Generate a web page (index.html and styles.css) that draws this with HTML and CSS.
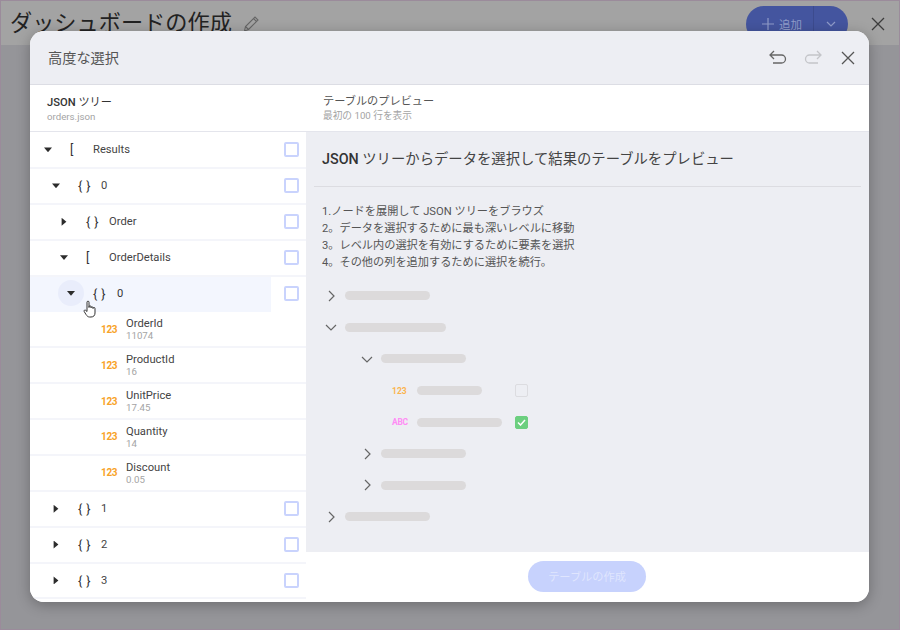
FILE: index.html
```html
<!DOCTYPE html>
<html lang="ja">
<head>
  <meta charset="UTF-8" />
  <title>ダッシュボードの作成</title>
  <link rel="stylesheet" href="styles.css">
</head>
<body>

<header class="topbar">
  <h1 class="page-title">ダッシュボードの作成</h1>
  <svg class="pencil" width="20" height="20" viewBox="0 0 20 20"><path d="M3.500 17l1-4.500L14 3l3 3-9.500 9.500zM4.500 12.500l3 3M12.500 4.500l3 3" fill="none" stroke="#666" stroke-width="1.100"/></svg>
  <div class="add-group">
    <span class="add-btn"><svg width="12" height="12" viewBox="0 0 12 12"><path d="M6 0v12M0 6h12" stroke="#8f9bc9" stroke-width="1.200"/></svg>追加</span>
    <span class="add-arrow"><svg width="10" height="6" viewBox="0 0 10 6"><path d="M1 1l4 4 4-4" fill="none" stroke="#8f9bc9" stroke-width="1.200"/></svg></span>
  </div>
  <svg class="page-close" width="14" height="14" viewBox="0 0 14 14"><path d="M1 1l12 12M13 1L1 13" stroke="#3c3c3c" stroke-width="1.300"/></svg>
</header>

<div class="dialog">
  <div class="dialog-head">
    <span class="dialog-title">高度な選択</span>
    <div class="dialog-tools">
      <svg width="20" height="20" viewBox="0 0 20 20"><path d="M6 3L2 7l4 4M2 7h11.500a4 4 0 0 1 0 8H5" fill="none" stroke="#666" stroke-width="1.300"/></svg>
      <svg width="20" height="20" viewBox="0 0 20 20"><path d="M14 3l4 4-4 4M18 7H6.500a4 4 0 0 0 0 8H15" fill="none" stroke="#c4c5c9" stroke-width="1.300"/></svg>
      <svg width="20" height="20" viewBox="0 0 20 20"><path d="M4 4l12 12M16 4L4 16" fill="none" stroke="#555" stroke-width="1.300"/></svg>
    </div>
  </div>

  <div class="sub-head">
    <div class="sub-left">
      <div class="sub-title sub-strong"><b>JSON</b> ツリー</div>
      <div class="sub-note">orders.json</div>
    </div>
    <div class="sub-right">
      <div class="sub-title">テーブルのプレビュー</div>
      <div class="sub-note">最初の 100 行を表示</div>
    </div>
  </div>

  <div class="dialog-body">
    <div class="tree">
      <div class="tree-row d0"><i class="tri tri-down"></i><span class="kind">[</span><span class="name">Results</span><i class="box"></i></div>
      <div class="tree-row d1"><i class="tri tri-down"></i><span class="kind">{ }</span><span class="name">0</span><i class="box"></i></div>
      <div class="tree-row d2"><i class="tri tri-right"></i><span class="kind">{ }</span><span class="name">Order</span><i class="box"></i></div>
      <div class="tree-row d2"><i class="tri tri-down"></i><span class="kind">[</span><span class="name">OrderDetails</span><i class="box"></i></div>
      <div class="tree-row d3 hovered">
        <div class="hover-fill"><span class="tri-halo"><i class="tri tri-down"></i></span><span class="kind">{ }</span><span class="name">0</span></div>
        <i class="box"></i>
      </div>
      <div class="tree-row leaf"><span class="num">123</span><div class="leaf-text"><span class="name">OrderId</span><span class="value">11074</span></div></div>
      <div class="tree-row leaf"><span class="num">123</span><div class="leaf-text"><span class="name">ProductId</span><span class="value">16</span></div></div>
      <div class="tree-row leaf"><span class="num">123</span><div class="leaf-text"><span class="name">UnitPrice</span><span class="value">17.45</span></div></div>
      <div class="tree-row leaf"><span class="num">123</span><div class="leaf-text"><span class="name">Quantity</span><span class="value">14</span></div></div>
      <div class="tree-row leaf"><span class="num">123</span><div class="leaf-text"><span class="name">Discount</span><span class="value">0.05</span></div></div>
      <div class="tree-row d1"><i class="tri tri-right"></i><span class="kind">{ }</span><span class="name">1</span><i class="box"></i></div>
      <div class="tree-row d1"><i class="tri tri-right"></i><span class="kind">{ }</span><span class="name">2</span><i class="box"></i></div>
      <div class="tree-row d1"><i class="tri tri-right"></i><span class="kind">{ }</span><span class="name">3</span><i class="box"></i></div>
    </div>

    <div class="preview">
      <div class="preview-main">
        <h2 class="preview-title"><b>JSON</b> ツリーからデータを選択して結果のテーブルをプレビュー</h2>
        <ol class="steps">
          <li>1.ノードを展開して JSON ツリーをブラウズ</li>
          <li>2。データを選択するために最も深いレベルに移動</li>
          <li>3。レベル内の選択を有効にするために要素を選択</li>
          <li>4。その他の列を追加するために選択を続行。</li>
        </ol>
        <div class="sketch">
          <div class="sk-row sk0"><svg class="chev" width="12" height="12" viewBox="0 0 12 12"><path d="M4 1l5 5-5 5" /></svg><i class="bar w85"></i></div>
          <div class="sk-row sk0"><svg class="chev" width="12" height="12" viewBox="0 0 12 12"><path d="M1 4l5 5 5-5" /></svg><i class="bar w101"></i></div>
          <div class="sk-row sk1"><svg class="chev" width="12" height="12" viewBox="0 0 12 12"><path d="M1 4l5 5 5-5" /></svg><i class="bar w85"></i></div>
          <div class="sk-row sk2"><span class="sk-type sk-num">123</span><i class="bar w65"></i><i class="sk-box"></i></div>
          <div class="sk-row sk2"><span class="sk-type sk-abc">ABC</span><i class="bar w85"></i><i class="sk-box checked"><svg width="9" height="7" viewBox="0 0 9 7"><path d="M1 3.500l2.500 2.500L8 1" fill="none" stroke="#fff" stroke-width="1.500"/></svg></i></div>
          <div class="sk-row sk1"><svg class="chev" width="12" height="12" viewBox="0 0 12 12"><path d="M4 1l5 5-5 5" /></svg><i class="bar w85"></i></div>
          <div class="sk-row sk1"><svg class="chev" width="12" height="12" viewBox="0 0 12 12"><path d="M4 1l5 5-5 5" /></svg><i class="bar w85"></i></div>
          <div class="sk-row sk0"><svg class="chev" width="12" height="12" viewBox="0 0 12 12"><path d="M4 1l5 5-5 5" /></svg><i class="bar w85"></i></div>
        </div>
      </div>
      <div class="preview-foot">
        <button class="create-btn">テーブルの作成</button>
      </div>
    </div>
  </div>

  <svg class="hand" width="14" height="18" viewBox="0 0 14 18"><path d="M4 9V2.200a1 1 0 0 1 2 0V7.500V6.800a1 1 0 0 1 2 0v1a1 1 0 0 1 2 0v.7a1 1 0 0 1 2 0V13c0 2.500-1.500 4-4 4H6.500C5 17 4 16 3 14.500L1.200 11.500c-.6-1 .6-2 1.500-1.200L4 11.500z" fill="#fff" stroke="#333" stroke-width="1"/></svg>
</div>

</body>
</html>
```

FILE: styles.css
```css
html, body {
  margin: 0;
  height: 100%;
}

body {
  position: relative;
  box-sizing: border-box;
  width: 900px;
  height: 630px;
  overflow: hidden;
  background: #959599;
  border: 1px solid #9b8b9b;
  font-family: Roboto, "Noto Sans CJK JP", sans-serif;
  color: #444;
}

.topbar {
  display: flex;
  align-items: center;
  height: 44px;
  padding: 0 14px 0 9px;
  background: #a3a3a3;
}

.page-title {
  margin: 0 0 4px;
  font-size: 22.200px;
  font-weight: 400;
  color: #222;
}

.pencil {
  margin: 2px 0 0 9px;
}

.add-group {
  display: flex;
  align-items: center;
  height: 36px;
  margin-left: auto;
  margin-right: 23px;
  margin-top: 2px;
  background: #44559f;
  border-radius: 18px;
  color: #8f9bc9;
  font-size: 11.500px;
}

.add-btn {
  display: flex;
  align-items: center;
  gap: 5px;
  height: 100%;
  padding: 0 11px 0 16px;
  border-right: 1px solid #3c4b8e;
}

.add-arrow {
  display: flex;
  align-items: center;
  padding: 0 12px 0 12px;
}

.page-close {
  margin-top: 1px;
}

.dialog {
  position: absolute;
  left: 29px;
  top: 30px;
  width: 839px;
  height: 571px;
  display: flex;
  flex-direction: column;
  overflow: hidden;
  background: #fff;
  border-radius: 14px;
  box-shadow: 0 3px 14px rgba(0, 0, 0, 0.28);
}

.dialog-head {
  flex: none;
  box-sizing: border-box;
  display: flex;
  align-items: center;
  justify-content: space-between;
  height: 54px;
  padding: 0 11px 0 18px;
  background: #edeef3;
  border-bottom: 1px solid #dcdde4;
}

.dialog-title {
  margin-bottom: 2px;
  font-size: 14.200px;
  color: #555;
}

.dialog-tools {
  display: flex;
  gap: 15px;
}

.sub-head {
  flex: none;
  box-sizing: border-box;
  display: flex;
  height: 47px;
  border-bottom: 1px solid #e4e5ec;
}

.sub-left {
  box-sizing: border-box;
  width: 276px;
  padding: 11px 0 0 17px;
}

.sub-right {
  padding: 9px 0 0 17px;
}

.sub-title {
  font-size: 11.200px;
  line-height: 15px;
  color: #555;
}

.sub-strong {
  line-height: 14px;
  color: #333;
}

.sub-title b {
  font-weight: 500;
}

.sub-note {
  font-size: 9.700px;
  line-height: 14px;
  color: #a4a4a4;
}

.dialog-body {
  flex: 1;
  display: flex;
  min-height: 0;
}

.tree {
  flex: none;
  box-sizing: border-box;
  width: 276px;
  padding-top: 1px;
  background: #fff;
}

.tree-row {
  box-sizing: border-box;
  display: flex;
  align-items: center;
  height: 35.875px;
  padding-right: 7px;
  border-bottom: 2px solid #f4f5fa;
  font-size: 11.200px;
}

.d0 { padding-left: 14px; }
.d1 { padding-left: 22px; }
.d2 { padding-left: 30px; }
.leaf { padding-left: 71px; }

.tri {
  flex: none;
  display: block;
  width: 8px;
  height: 8px;
  margin-right: 18px;
  background: #2c2c2c;
}

.tri-down {
  clip-path: polygon(0 20%, 100% 20%, 50% 80%);
}

.tri-right {
  clip-path: polygon(20% 0, 80% 50%, 20% 100%);
}

.kind {
  flex: none;
  width: 23px;
  font-size: 12.500px;
  word-spacing: 1px;
  color: #333;
}

.name {
  color: #444;
}

.box {
  flex: none;
  box-sizing: border-box;
  width: 15px;
  height: 15px;
  margin-left: auto;
  border: 2px solid #c9d3fd;
  border-radius: 2px;
  background: #fff;
}

.hovered {
  align-items: stretch;
  border-bottom: 0;
}

.hovered .box {
  align-self: center;
  margin-bottom: 2px;
}

.hover-fill {
  display: flex;
  align-items: center;
  width: 241px;
  box-sizing: border-box;
  padding: 0 0 2px 28px;
  background: #f3f6fe;
}

.hover-fill .name {
  margin-left: 1px;
  color: #333;
}

.tri-halo {
  flex: none;
  display: flex;
  align-items: center;
  justify-content: center;
  width: 26px;
  height: 26px;
  margin-right: 9px;
  border-radius: 50%;
  background: #e9edfb;
}

.tri-halo .tri {
  margin: 0;
}

.num {
  flex: none;
  width: 25px;
  font-size: 10px;
  font-weight: 700;
  letter-spacing: -0.300px;
  color: #f8a328;
}

.leaf-text {
  display: flex;
  flex-direction: column;
  margin-top: 2px;
  line-height: 12px;
}

.value {
  font-size: 9.700px;
  color: #a4a4a4;
}

.preview {
  flex: 1;
  display: flex;
  flex-direction: column;
  min-width: 0;
}

.preview-main {
  flex: 1;
  box-sizing: border-box;
  padding: 0 8px;
  background: #edeef3;
}

.preview-title {
  box-sizing: border-box;
  height: 55px;
  margin: 0;
  padding: 17px 0 0 8px;
  border-bottom: 1px solid #dcdce1;
  font-size: 14.350px;
  line-height: 22px;
  font-weight: 400;
  color: #444;
}

.preview-title b {
  font-weight: 500;
  color: #333;
}

.steps {
  margin: 16px 0 0;
  padding: 0 0 0 8px;
  list-style: none;
  font-size: 11.200px;
  line-height: 17px;
  color: #555;
}

.sketch {
  margin-top: 9px;
}

.sk-row {
  display: flex;
  align-items: center;
  height: 31.600px;
}

.sk0 { padding-left: 11px; }
.sk1 { padding-left: 47px; }
.sk2 { padding-left: 78px; }

.chev {
  flex: none;
  margin-right: 8px;
  fill: none;
  stroke: #666;
  stroke-width: 1.200;
}

.bar {
  display: block;
  height: 9px;
  border-radius: 5px;
  background: #dcdadb;
}

.w65 { width: 65px; }
.w85 { width: 85px; }
.w101 { width: 101px; }

.sk-type {
  flex: none;
  width: 25px;
  font-size: 8.500px;
  font-weight: 700;
}

.sk-num { color: #fbb44e; }
.sk-abc {
  letter-spacing: -0.300px;
  color: #ff8cf5;
}

.sk-box {
  display: flex;
  align-items: center;
  justify-content: center;
  box-sizing: border-box;
  width: 13px;
  height: 13px;
  border: 1px solid #dcdce0;
  border-radius: 2px;
  position: absolute;
  left: 485px;
}

.checked {
  background: #6ccf7f;
  border-color: #6ccf7f;
}

.preview-foot {
  flex: none;
  display: flex;
  justify-content: center;
  align-items: center;
  height: 50px;
  background: #fff;
}

.create-btn {
  width: 118px;
  height: 31px;
  margin: -2px 0 0 -1px;
  padding: 0;
  border: none;
  border-radius: 16px;
  background: #c7d2fd;
  color: #dfe5fe;
  font-family: inherit;
  font-size: 11.200px;
}

.hand {
  position: absolute;
  left: 53px;
  top: 269px;
}
```
